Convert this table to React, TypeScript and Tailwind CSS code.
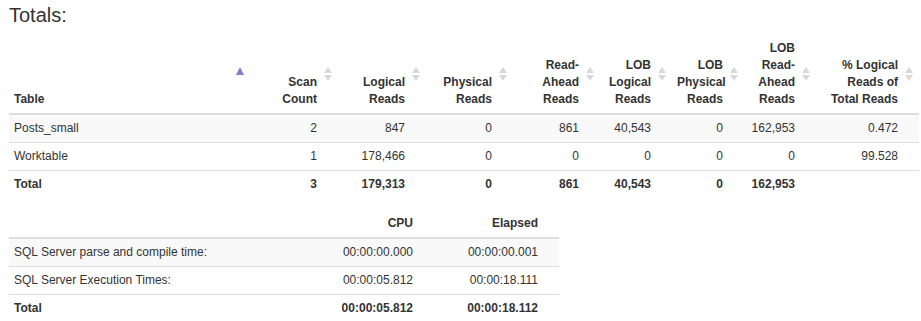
import React from "react";

const ioCols = [
  { label: "Scan Count", width: "w-[88px]" },
  { label: "Logical Reads", width: "w-[88px]" },
  { label: "Physical Reads", width: "w-[87px]" },
  { label: "Read-Ahead Reads", width: "w-[87px]" },
  { label: "LOB Logical Reads", width: "w-[72px]" },
  { label: "LOB Physical Reads", width: "w-[72px]" },
  { label: "LOB Read-Ahead Reads", width: "w-[72px]" },
  { label: "% Logical Reads of Total Reads", width: "w-[103px]" },
];

const ioRows = [
  { table: "Posts_small", values: ["2", "847", "0", "861", "40,543", "0", "162,953", "0.472"] },
  { table: "Worktable", values: ["1", "178,466", "0", "0", "0", "0", "0", "99.528"] },
];

const ioTotal = ["3", "179,313", "0", "861", "40,543", "0", "162,953", ""];

const timeRows = [
  { label: "SQL Server parse and compile time:", cpu: "00:00:00.000", elapsed: "00:00:00.001" },
  { label: "SQL Server Execution Times:", cpu: "00:00:05.812", elapsed: "00:00:18.111" },
];

function SortIcon({ active }: { active?: boolean }) {
  if (active) {
    return (
      <svg viewBox="0 0 8 8" className="absolute right-[6px] top-1/2 h-[8px] w-[8px] -translate-y-[7px]">
        <polygon points="4,0 8,8 0,8" fill="#7f7fdb" />
      </svg>
    );
  }
  return (
    <svg viewBox="0 0 8 14" className="absolute right-[6px] top-1/2 h-[14px] w-[8px] -translate-y-1/2">
      <polygon points="4,0 8,6 0,6" fill="#d8d8d8" />
      <polygon points="0,8 8,8 4,14" fill="#d8d8d8" />
    </svg>
  );
}

const th = "relative border-b-2 border-[#ddd] py-[5px] align-bottom font-bold";
const td = "border-t border-[#ddd] py-[5px] align-top";

export default function App() {
  return (
    <div className="min-h-[321px] bg-white text-[12px] leading-[17px] text-[#333] [font-family:'Liberation_Sans',Arial,sans-serif]">
      <h3 className="ml-[9px] pt-[4px] text-[20px] leading-[22px] font-normal">Totals:</h3>

      <table className="ml-[9px] mt-[9px] w-[910px] table-fixed border-collapse">
        <colgroup>
          <col className="w-[241px]" />
          {ioCols.map((c) => (
            <col key={c.label} className={c.width} />
          ))}
        </colgroup>
        <thead>
          <tr>
            <th className={`${th} pl-[5px] pr-[21px] text-left`}>
              Table
              <SortIcon active />
            </th>
            {ioCols.map((c) => (
              <th key={c.label} className={`${th} pl-[5px] pr-[21px] text-right`}>
                {c.label}
                <SortIcon />
              </th>
            ))}
          </tr>
        </thead>
        <tbody>
          {ioRows.map((row, i) => (
            <tr key={row.table} className={i % 2 === 0 ? "bg-[#f9f9f9]" : "bg-white"}>
              <td className={`${td} pl-[5px] pr-[21px] text-left`}>{row.table}</td>
              {row.values.map((v, j) => (
                <td key={j} className={`${td} pl-[5px] pr-[21px] text-right`}>
                  {v}
                </td>
              ))}
            </tr>
          ))}
          <tr className="font-bold">
            <td className={`${td} pl-[5px] pr-[21px] text-left`}>Total</td>
            {ioTotal.map((v, j) => (
              <td key={j} className={`${td} pl-[5px] pr-[21px] text-right`}>
                {v}
              </td>
            ))}
          </tr>
        </tbody>
      </table>

      <table className="ml-[9px] mt-[12px] w-[550px] table-fixed border-collapse">
        <colgroup>
          <col className="w-[300px]" />
          <col className="w-[125px]" />
          <col className="w-[125px]" />
        </colgroup>
        <thead>
          <tr>
            <th className={`${th} pl-[5px] pr-[21px] text-left`}></th>
            <th className={`${th} pl-[5px] pr-[21px] text-right`}>CPU</th>
            <th className={`${th} pl-[5px] pr-[21px] text-right`}>Elapsed</th>
          </tr>
        </thead>
        <tbody>
          {timeRows.map((row, i) => (
            <tr key={row.label} className={i % 2 === 0 ? "bg-[#f9f9f9]" : "bg-white"}>
              <td className={`${td} pl-[5px] pr-[21px] text-left`}>{row.label}</td>
              <td className={`${td} pl-[5px] pr-[21px] text-right`}>{row.cpu}</td>
              <td className={`${td} pl-[5px] pr-[21px] text-right`}>{row.elapsed}</td>
            </tr>
          ))}
          <tr className="font-bold">
            <td className={`${td} pl-[5px] pr-[21px] text-left`}>Total</td>
            <td className={`${td} pl-[5px] pr-[21px] text-right`}>00:00:05.812</td>
            <td className={`${td} pl-[5px] pr-[21px] text-right`}>00:00:18.112</td>
          </tr>
        </tbody>
      </table>
    </div>
  );
}
